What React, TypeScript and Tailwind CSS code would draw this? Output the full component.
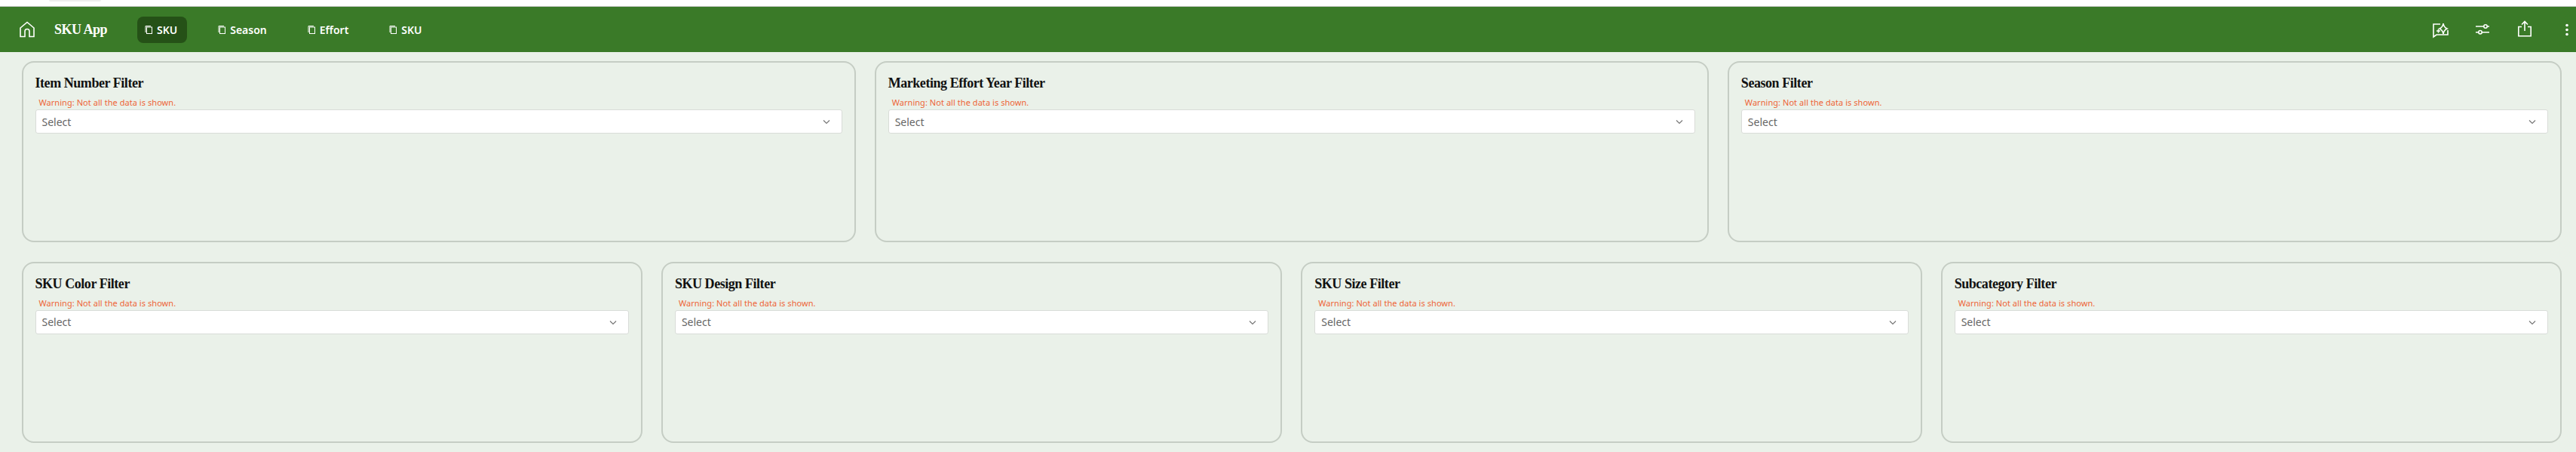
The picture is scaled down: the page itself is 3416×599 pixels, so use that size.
import React from "react";

function CopyIcon() {
  return (
    <svg width="11" height="13" viewBox="0 0 11 13" fill="none" stroke="currentColor" strokeWidth="1" className="shrink-0">
      <path d="M1 10V1.500h7" />
      <rect x="2.500" y="3" width="7" height="8.500" />
    </svg>
  );
}

function NavItem({ label, active }: { label: string; active?: boolean }) {
  return (
    <div className={`flex items-center gap-[5px] h-[35px] rounded-[8px] pl-[10px] pr-[13px] text-[14px] font-semibold text-white ${active ? "bg-[#255117]" : ""}`}>
      <CopyIcon />
      <span>{label}</span>
    </div>
  );
}

function FilterCard({ title }: { title: string }) {
  return (
    <div className="h-[240px] rounded-[16px] border-2 border-[#c5cdc4] px-[16px] pt-[15px]">
      <div className="h-[24px] text-[18px] leading-[24px] tracking-[-0.45px] font-bold text-[#111] font-['Liberation_Serif',serif]">{title}</div>
      <div className="mt-[6px] mb-[2px] pl-[5px] h-[15px] text-[11px] leading-[15px] tracking-[0.05px] text-[#ee6436]">Warning: Not all the data is shown.</div>
      <div className="flex items-center justify-between h-[32px] rounded-[3px] border border-[#d9dcd8] bg-white pl-[8px] pr-[14px] text-[14px] text-[#666]">
        <span>Select</span>
        <svg width="12" height="12" viewBox="0 0 12 12" fill="none" stroke="#777" strokeWidth="1.2">
          <path d="M2 4.500 6 8.500l4-4" />
        </svg>
      </div>
    </div>
  );
}

export default function App() {
  return (
    <div className="w-[3416px] h-[599px] overflow-hidden bg-[#eaf1e9] font-['Noto_Sans',sans-serif]">
      <div className="h-[9px] bg-white border-b border-[#c9c9c9] pl-[65px]">
        <div className="w-[69px] h-[2px] rounded-b-[4px] bg-[#eeeeee]" />
      </div>
      <header className="flex items-center h-[60px] bg-[#3a7a28] text-white">
        <svg width="24" height="24" viewBox="0 0 24 24" fill="none" stroke="currentColor" strokeWidth="1.600" className="ml-[24px] shrink-0">
          <path d="M3 21.500h6v-7a3 3 0 0 1 6 0v7h6V10L12 2.500 3 10z" />
        </svg>
        <div className="ml-[24px] w-[70px] shrink-0 whitespace-nowrap text-[18px] tracking-[-0.5px] font-bold font-['Liberation_Serif',serif]">SKU App</div>
        <div className="flex items-center gap-[31px] ml-[40px]">
          <NavItem label="SKU" active />
          <NavItem label="Season" />
          <NavItem label="Effort" />
          <NavItem label="SKU" />
        </div>
        <div className="ml-auto flex items-center gap-[32px]">
          <svg width="24" height="24" viewBox="0 0 24 24" fill="none" stroke="currentColor" strokeWidth="1.600">
            <path d="M12 5H3v17l4-3h15v-6" />
            <path d="M16 4c.5 3.500 1.500 5.500 5 7-3.500 1.500-4.500 3.500-5 7-.5-3.500-1.500-5.500-5-7 3.500-1.500 4.500-3.500 5-7z" />
            <path d="M7 14h5M9.500 11.500v5" />
          </svg>
          <svg width="24" height="24" viewBox="0 0 24 24" fill="none" stroke="currentColor" strokeWidth="1.600">
            <path d="M3 8h11M18.200 8H21M3 15.700h3.800M11.200 15.700H21" />
            <circle cx="16" cy="8" r="2.200" />
            <circle cx="9" cy="15.700" r="2.200" />
          </svg>
          <svg width="24" height="24" viewBox="0 0 24 24" fill="none" stroke="currentColor" strokeWidth="1.600">
            <path d="M8 8.500H3.800v12.200h16.400V8.500H16M12 14V2M8 5.500l4-4 4 4" />
          </svg>
          <svg width="24" height="24" viewBox="0 0 24 24" fill="currentColor">
            <circle cx="12" cy="6.500" r="1.800" />
            <circle cx="12" cy="12.500" r="1.800" />
            <circle cx="12" cy="18.500" r="1.800" />
          </svg>
        </div>
      </header>
      <main className="flex flex-col gap-[25.5px] pl-[28.5px] pr-[19px] pt-[12.4px]">
        <div className="grid grid-cols-3 gap-[25px]">
          <FilterCard title="Item Number Filter" />
          <FilterCard title="Marketing Effort Year Filter" />
          <FilterCard title="Season Filter" />
        </div>
        <div className="grid grid-cols-4 gap-[25px]">
          <FilterCard title="SKU Color Filter" />
          <FilterCard title="SKU Design Filter" />
          <FilterCard title="SKU Size Filter" />
          <FilterCard title="Subcategory Filter" />
        </div>
      </main>
    </div>
  );
}
